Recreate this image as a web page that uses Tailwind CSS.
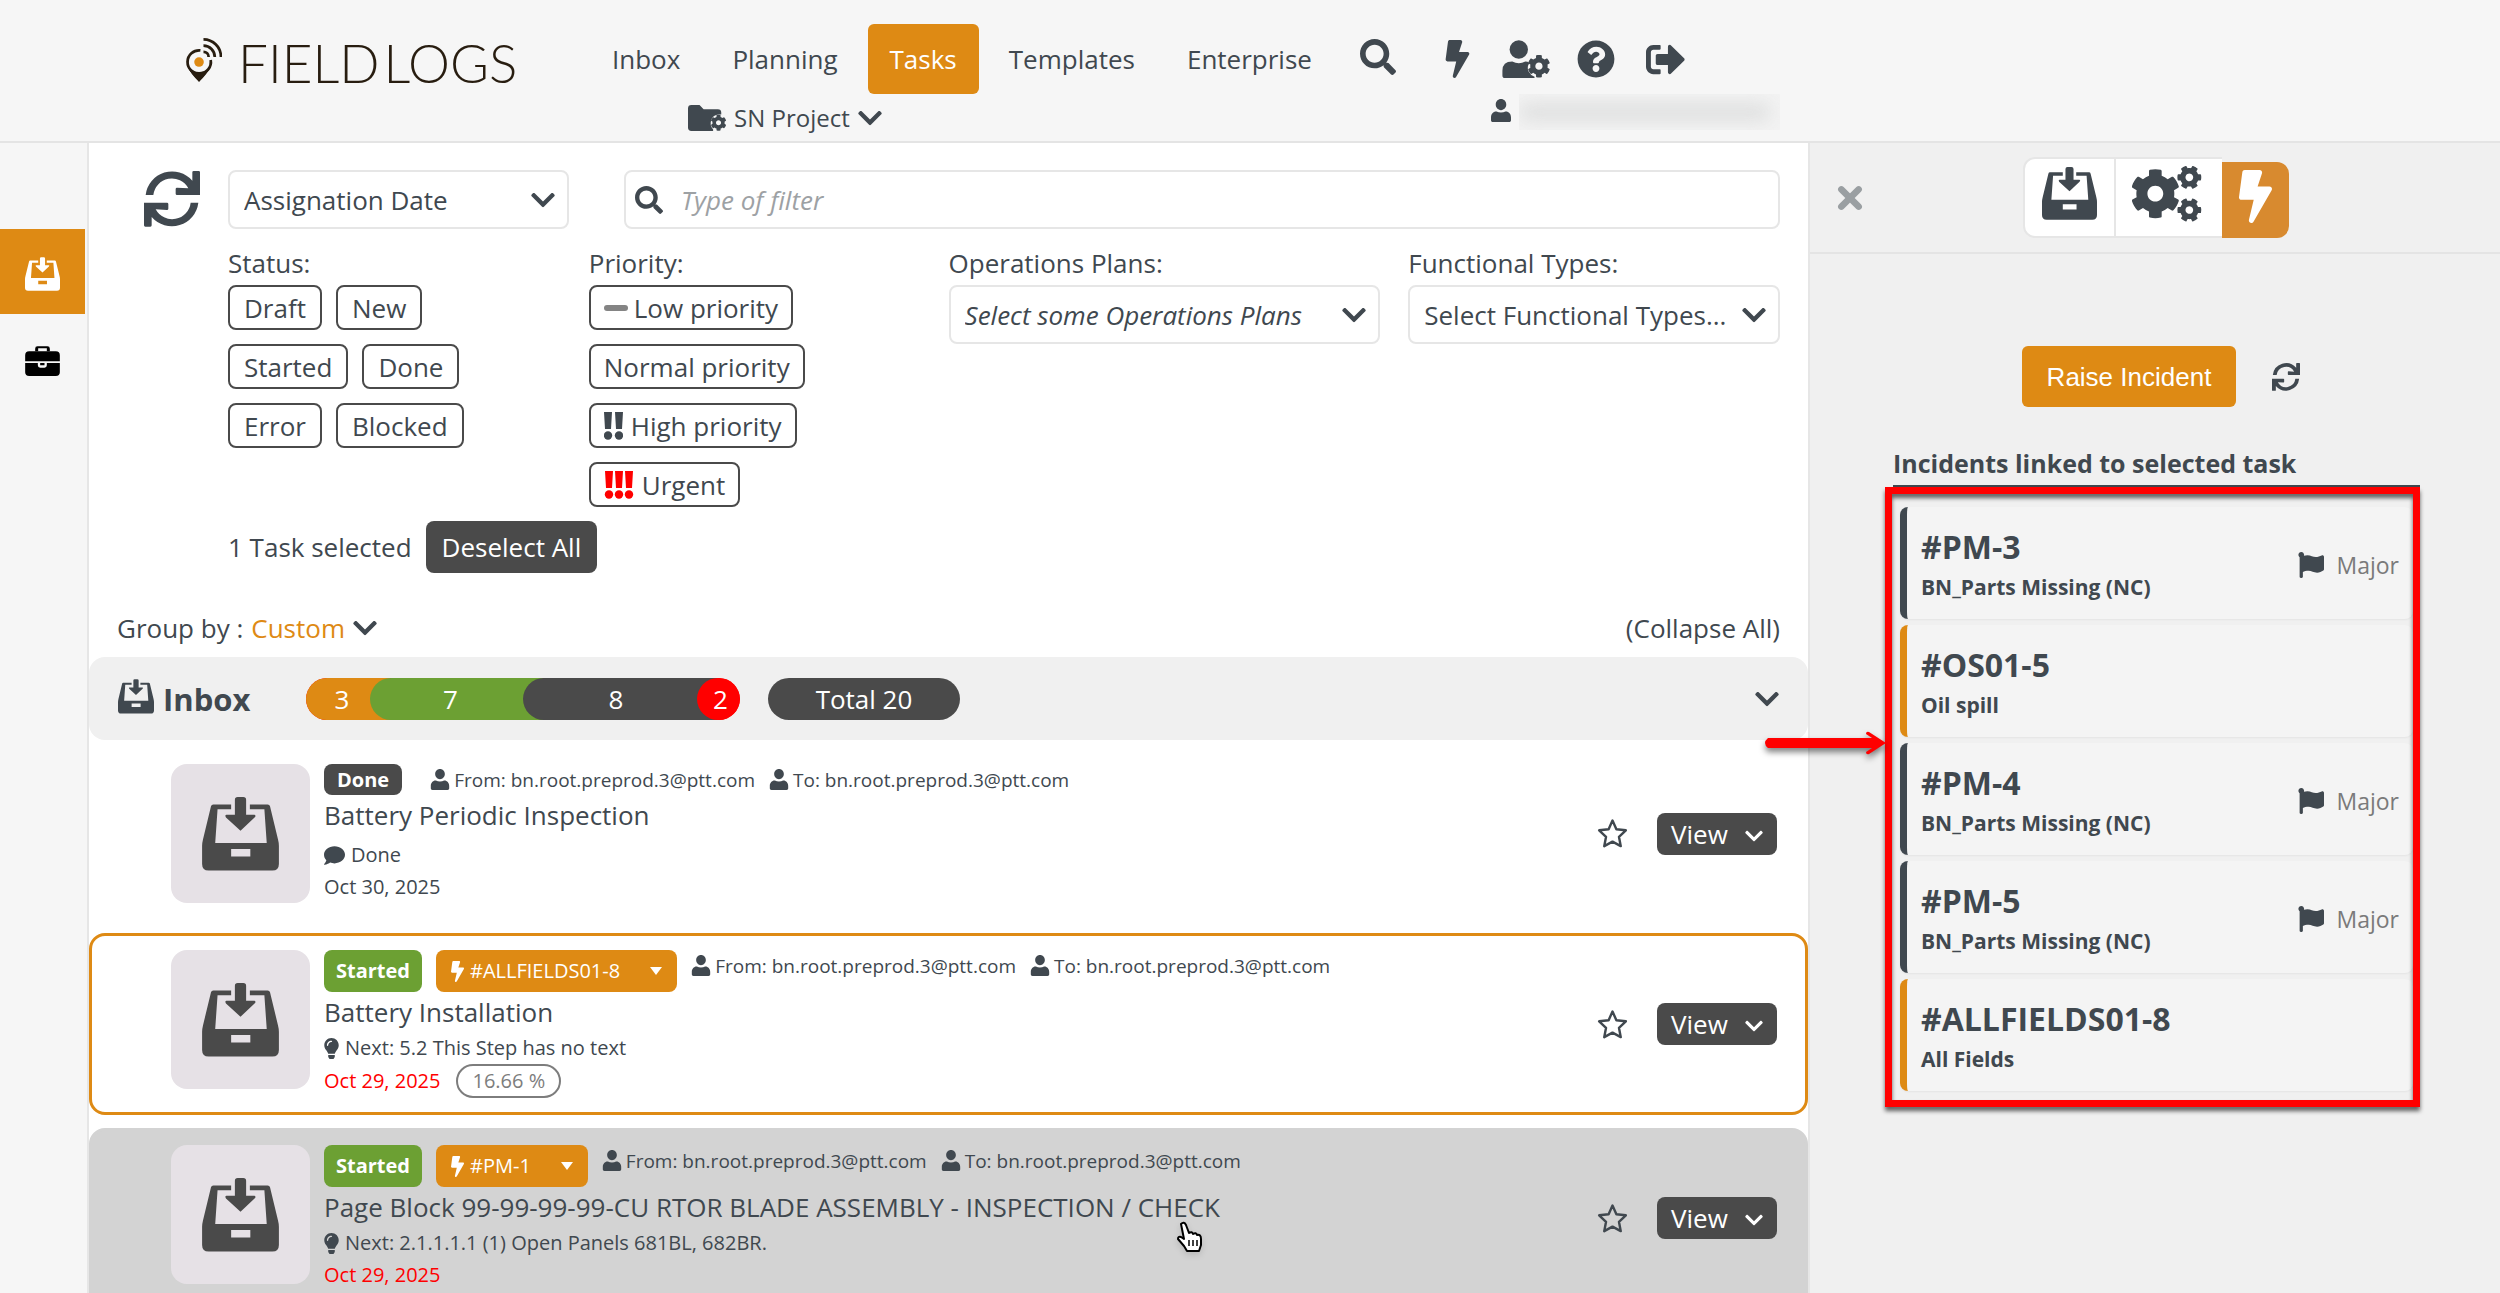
<!DOCTYPE html>
<html lang="en">
<head>
<meta charset="utf-8">
<title>Field Logs - Tasks</title>
<script src="https://cdn.jsdelivr.net/npm/@tailwindcss/browser@4"></script>
</head>
<body class="h-screen overflow-hidden flex flex-col bg-[#f6f6f6] text-[#40484f] font-['Open_Sans',sans-serif] text-[26px] leading-8">

<!-- Icon sprite -->
<svg class="hidden" aria-hidden="true">
  <symbol id="i-search" viewBox="0 0 512 512"><path d="M505 442.7L405.3 343c-4.5-4.5-10.6-7-17-7H372c27.6-35.3 44-79.7 44-128C416 93.1 322.9 0 208 0S0 93.1 0 208s93.1 208 208 208c48.3 0 92.7-16.4 128-44v16.3c0 6.4 2.5 12.5 7 17l99.7 99.7c9.4 9.4 24.6 9.4 33.9 0l28.3-28.3c9.4-9.4 9.4-24.6.1-34zM208 336c-70.7 0-128-57.2-128-128 0-70.7 57.2-128 128-128 70.7 0 128 57.2 128 128 0 70.7-57.2 128-128 128z"/></symbol>
  <symbol id="i-bolt" viewBox="0 0 320 512"><path d="M296 160H180.600l42.600-129.800C227.200 15 215.700 0 200 0H56C44 0 33.800 8.900 32.200 20.800l-32 240C-1.700 275.200 9.500 288 24 288h118.700L96.600 482.500c-3.600 15.200 8 29.500 23.300 29.500 8.400 0 16.400-4.400 20.800-12l176-304c9.300-15.900-2.200-36-20.700-36z"/></symbol>
  <symbol id="i-user" viewBox="0 0 448 512"><path d="M224 248c68 0 118-54 118-124S292 0 224 0 106 54 106 124s50 124 118 124zm110 32h-10c-30 14-62 22-100 22s-70-8-100-22h-10C50 280 0 340 0 412v60c0 24 16 40 40 40h368c24 0 40-16 40-40v-60c0-72-50-132-114-132z"/></symbol>
  <symbol id="i-cog" viewBox="0 0 512 512"><path d="M487.400 315.700l-42.600-24.600c4.300-23.200 4.300-47 0-70.200l42.600-24.600c4.900-2.800 7.100-8.600 5.500-14-11.100-35.600-30-67.800-54.700-94.600-3.800-4.100-10-5.100-14.800-2.300L380.800 110c-17.900-15.400-38.500-27.300-60.800-35.100V25.800c0-5.600-3.900-10.500-9.400-11.700-36.700-8.200-74.300-7.800-109.200 0-5.500 1.200-9.400 6.100-9.400 11.700V75c-22.200 7.900-42.800 19.800-60.800 35.100L88.700 85.500c-4.900-2.800-11-1.900-14.800 2.300-24.700 26.700-43.600 58.900-54.700 94.600-1.700 5.400.6 11.200 5.500 14L67.300 221c-4.300 23.200-4.300 47 0 70.200l-42.600 24.600c-4.900 2.800-7.100 8.600-5.500 14 11.100 35.600 30 67.800 54.700 94.600 3.800 4.100 10 5.100 14.800 2.300l42.600-24.600c17.900 15.400 38.500 27.300 60.800 35.100v49.200c0 5.600 3.900 10.500 9.400 11.700 36.700 8.200 74.300 7.800 109.200 0 5.500-1.200 9.400-6.100 9.400-11.700v-49.200c22.200-7.900 42.800-19.800 60.800-35.100l42.600 24.600c4.900 2.800 11 1.900 14.800-2.300 24.700-26.700 43.600-58.900 54.700-94.600 1.500-5.500-.7-11.300-5.600-14.100zM256 336c-44.100 0-80-35.900-80-80s35.900-80 80-80 80 35.900 80 80-35.900 80-80 80z"/></symbol>
  <symbol id="i-question" viewBox="0 0 512 512"><path d="M504 256c0 136.997-111.043 248-248 248S8 392.997 8 256C8 119.083 119.043 8 256 8s248 111.083 248 248zM262.655 90c-54.497 0-89.255 22.957-116.549 63.758-3.536 5.286-2.353 12.415 2.715 16.258l34.699 26.310c5.205 3.947 12.621 3.008 16.665-2.122 17.864-22.658 30.113-35.797 57.303-35.797 20.429 0 45.698 13.148 45.698 32.958 0 14.976-12.363 22.667-32.534 33.976C247.128 238.528 216 254.941 216 296v4c0 6.627 5.373 12 12 12h56c6.627 0 12-5.373 12-12v-1.333c0-28.462 83.186-29.647 83.186-106.667 0-58.002-60.165-102-116.531-102zM256 338c-25.365 0-46 20.635-46 46 0 25.364 20.635 46 46 46s46-20.636 46-46c0-25.365-20.635-46-46-46z"/></symbol>
  <symbol id="i-exit" viewBox="0 0 512 512"><path d="M500 273L329 441c-15 15-41 4.500-41-17v-96H152c-13.300 0-24-10.700-24-24v-96c0-13.300 10.700-24 24-24h136V88c0-21.400 25.900-32 41-17l171 168c9.300 9.400 9.300 24.600 0 34zM192 436v-40c0-6.600-5.400-12-12-12H96c-17.700 0-32-14.300-32-32V160c0-17.700 14.300-32 32-32h84c6.600 0 12-5.400 12-12V76c0-6.600-5.400-12-12-12H96c-53 0-96 43-96 96v192c0 53 43 96 96 96h84c6.600 0 12-5.400 12-12z"/></symbol>
  <symbol id="i-chevron" viewBox="0 120 448 270"><path d="M207.029 381.476L12.686 187.132c-9.373-9.373-9.373-24.569 0-33.941l22.667-22.667c9.357-9.357 24.522-9.375 33.901-.04L224 284.505l154.745-154.021c9.379-9.335 24.544-9.317 33.901.04l22.667 22.667c9.373 9.373 9.373 24.569 0 33.941L240.971 381.476c-9.373 9.372-24.569 9.372-33.942 0z"/></symbol>
  <symbol id="i-comment" viewBox="0 0 512 512"><path d="M256 32C114.600 32 0 125.100 0 240c0 49.600 21.400 95 57 130.700C44.500 421.100 2.700 466 2.200 466.500c-2.200 2.300-2.800 5.700-1.500 8.700S4.800 480 8 480c66.300 0 116-31.800 140.600-51.400 32.700 12.300 69 19.400 107.400 19.400 141.400 0 256-93.100 256-208S397.400 32 256 32z"/></symbol>
  <symbol id="i-flag" viewBox="0 0 512 512"><path d="M349.565 98.783C295.978 98.783 251.721 64 184.348 64c-24.955 0-47.309 4.384-68.045 12.013a55.947 55.947 0 0 0 3.586-23.562C118.117 24.015 94.806 1.206 66.338.048 34.345-1.254 8 24.296 8 56c0 19.026 9.497 35.825 24 45.945V488c0 13.255 10.745 24 24 24h16c13.255 0 24-10.745 24-24v-94.400c28.311-12.064 63.582-22.122 114.435-22.122 53.588 0 97.844 34.783 165.217 34.783 48.169 0 86.667-16.294 122.505-40.858C506.840 359.452 512 349.571 512 339.045v-243.100c0-23.393-24.269-38.870-45.485-29.016-34.338 15.948-76.454 31.854-116.950 31.854z"/></symbol>
  <symbol id="i-bulb" viewBox="0 0 352 512"><path d="M96.060 454.350c.01 6.290 1.870 12.450 5.360 17.690l17.090 25.690a31.990 31.990 0 0 0 26.640 14.280h61.710a31.990 31.990 0 0 0 26.640-14.280l17.090-25.690a31.989 31.989 0 0 0 5.360-17.690l.04-38.350H96.010l.05 38.350zM0 176c0 44.370 16.450 84.850 43.560 115.780 16.520 18.850 42.360 58.230 52.210 91.450.04.26.07.52.11.78h160.240c.04-.26.07-.51.11-.78 9.850-33.220 35.690-72.600 52.210-91.450C335.550 260.850 352 220.370 352 176 352 78.610 272.910-.3 175.450 0 73.440.31 0 82.970 0 176zm176-80c-44.110 0-80 35.890-80 80 0 8.840-7.160 16-16 16s-16-7.160-16-16c0-61.760 50.240-112 112-112 8.840 0 16 7.160 16 16s-7.160 16-16 16z"/></symbol>
  <symbol id="i-star" viewBox="0 0 36 36"><path d="M18 3l4.500 10 11 1.300-8 7.500 2.100 10.900-9.600-5.300-9.600 5.300 2.100-10.900-8-7.500 11-1.300z" fill="none" stroke="currentColor" stroke-width="2.800" stroke-linejoin="round"/></symbol>
  <symbol id="i-refresh" viewBox="0 0 168 168"><g id="half"><path d="M5 72A80 80 0 0 1 145 29V4q0-4 4-4h15q4 0 4 4v68h-69q-4 0-4-4V54q0-4 4-4l34 2A56 56 0 0 0 28 72z"/></g><use href="#half" transform="rotate(180 84 83.500)"/></symbol>
  <symbol id="i-inbox" viewBox="0 0 164 158"><path fill-rule="evenodd" d="M62 16H24q-4 0-5 4L2 90Q0 98 0 104V143Q0 157 14 157H150Q164 157 164 143V104Q164 98 162 90L145 20q-1-4-5-4H102V26H133L138 98H28L33 26H62ZM62 111H103V127H62Z"/><path d="M70 6Q70 0 76 0H88Q94 0 94 6V38H112Q116 40 112 44L82 72L51 44Q48 38 52 38H70Z"/></symbol>
  <symbol id="i-gears" viewBox="0 0 210 166"><use href="#i-cog" x="-6" y="6" width="152" height="152"/><g transform="rotate(30 172 33)"><use href="#i-cog" x="135" y="-4" width="74" height="74"/></g><g transform="rotate(30 172 131)"><use href="#i-cog" x="135" y="94" width="74" height="74"/></g></symbol>
  <symbol id="i-briefcase" viewBox="0 0 104 90"><path d="M30 16V8q0-7 7-7H67q7 0 7 7V16H65V7H39V16Z"/><path d="M12 16H92Q104 16 104 28V46H0V28Q0 16 12 16ZM0 51H38V58q0 7 7 7H58q7 0 7-7V51H104V79Q104 90 92 90H12Q0 90 0 79ZM45 51H58V58H45Z"/></symbol>
  <symbol id="i-usercog" viewBox="0 0 144 116"><circle cx="50" cy="29" r="28"/><path d="M0 108V94Q0 66 30 66Q50 76 70 66Q78 66 82 70Q74 84 80 96Q86 108 98 112V116H8Q0 116 0 108Z"/><use href="#i-cog" x="76" y="44" width="71" height="72"/></symbol>
  <symbol id="i-foldercog" viewBox="0 0 112 76"><path d="M0 10Q0 0 10 0H34L46 12H88Q98 12 98 22V28Q78 26 70 40Q62 58 74 72V76H10Q0 76 0 66Z"/><use href="#i-cog" x="66" y="28" width="48" height="48"/></symbol>
  <symbol id="i-close" viewBox="0 0 24 24"><path d="M4 4L20 20M20 4L4 20" fill="none" stroke="currentColor" stroke-width="6" stroke-linecap="round"/></symbol>
</svg>

<header class="flex shrink-0 h-[143px] border-b-2 border-[#e4e4e4] pl-[186px] pt-6">
  <a href="#" aria-label="Field Logs" class="flex items-center gap-4 w-[404px] h-[76px] shrink-0 text-[#281d10]">
    <svg class="w-[36px] h-[44px] mb-1" viewBox="0 0 105 128" fill="none">
      <path d="M38 128L10 94Q38 104 66 94Z" fill="currentColor"/>
      <path d="M42 36A34 34 0 1 0 72 64" stroke="currentColor" stroke-width="8"/>
      <path d="M4 80Q12 104 38 127Q64 104 72 80Q56 104 38 104Q20 104 4 80Z" fill="currentColor"/>
      <circle cx="38" cy="70" r="14" fill="#de8a14"/>
      <path d="M51 40A15 15 0 0 1 66 55M51 22A33 33 0 0 1 84 55M51 4A51 51 0 0 1 102 55" stroke="currentColor" stroke-width="8"/>
    </svg>
    <span class="flex gap-1 font-['Lato',sans-serif] font-light text-[53px] leading-none"><span>FIELD</span><span>LOGS</span></span>
  </a>
  <div class="flex flex-col">
    <nav class="flex gap-2 h-[70px]">
      <a href="#" class="flex items-center px-[22px] rounded-md">Inbox</a>
      <a href="#" class="flex items-center px-[22px] rounded-md">Planning</a>
      <a href="#" class="flex items-center px-[22px] rounded-md bg-[#de8a14] text-white">Tasks</a>
      <a href="#" class="flex items-center px-[22px] rounded-md">Templates</a>
      <a href="#" class="flex items-center px-[22px] rounded-md">Enterprise</a>
    </nav>
    <button class="flex items-center gap-2 pt-2 pl-[98px]">
      <svg class="w-[38px] h-[26px] fill-current"><use href="#i-foldercog"/></svg>
      <span class="text-[24px]">SN Project</span>
      <svg class="w-6 h-4 fill-current"><use href="#i-chevron"/></svg>
    </button>
  </div>
  <div class="flex flex-col pl-[26px]">
    <div class="flex items-center h-[70px]">
      <button aria-label="Search" class="mr-[49px] pb-1"><svg class="size-9 fill-current"><use href="#i-search"/></svg></button>
      <button aria-label="Incidents" class="mr-8"><svg class="w-[25px] h-[38px] fill-current"><use href="#i-bolt"/></svg></button>
      <button aria-label="User settings" class="mr-[27px]"><svg class="w-[48px] h-[38px] fill-current"><use href="#i-usercog"/></svg></button>
      <button aria-label="Help" class="mr-[31px]"><svg class="size-[38px] fill-current"><use href="#i-question"/></svg></button>
      <button aria-label="Log out"><svg class="size-[39px] fill-current"><use href="#i-exit"/></svg></button>
    </div>
    <div class="flex gap-2 pl-[131px]">
      <svg class="w-5 h-[23px] mt-[5px] fill-current"><use href="#i-user"/></svg>
      <span class="w-[261px] h-9 overflow-hidden bg-[#f3f3f3] flex items-center"><span class="w-[252px] h-4 rounded-full bg-[#dcdddd] blur-[9px]"></span></span>
    </div>
  </div>
</header>

<div class="flex flex-1 min-h-0">
  <aside class="w-[89px] shrink-0 border-r-2 border-[#e6e6e6] pt-[86px]">
    <a href="#" aria-label="Inbox" class="flex items-center justify-center w-[85px] h-[85px] bg-[#de8a14] text-white"><svg class="w-[35px] h-[34px] mt-1 fill-current"><use href="#i-inbox"/></svg></a>
    <a href="#" aria-label="Jobs" class="flex items-center justify-center w-[85px] h-[93px] text-black"><svg class="w-[35px] h-[30px] fill-current"><use href="#i-briefcase"/></svg></a>
  </aside>

  <main class="flex-1 min-w-0 bg-white pt-[27px]">
    <div class="flex pl-[55px] pr-7">
      <button aria-label="Refresh" class="self-start mr-[28px] mt-px"><svg class="size-14 fill-current"><use href="#i-refresh"/></svg></button>
      <div class="flex-1">
        <div class="flex">
          <div class="relative w-[341px] mr-[55px]">
            <select aria-label="Sort by" class="appearance-none w-full h-[59px] px-[14px] border-2 border-[#e6e6e6] rounded-lg"><option>Assignation Date</option></select>
            <svg class="absolute right-[14px] top-[22px] w-6 h-4 fill-current pointer-events-none"><use href="#i-chevron"/></svg>
          </div>
          <label class="flex flex-1 items-center gap-[18px] h-[59px] px-[9px] border-2 border-[#e6e6e6] rounded-lg">
            <svg class="size-7 fill-current"><use href="#i-search"/></svg>
            <input type="text" aria-label="Filter" placeholder="Type of filter" class="flex-1 italic outline-none placeholder:text-[#9da1a4]">
          </label>
        </div>
        <div class="grid grid-cols-[361fr_360fr_460fr_372fr] pt-[18px]">
          <section>
            <h2>Status:</h2>
            <div class="flex flex-wrap gap-[14px] pt-[6px] max-w-[300px]">
              <button class="h-[45px] px-[14px] border-2 border-[#4a4a4a] rounded-lg">Draft</button>
              <button class="h-[45px] px-[14px] border-2 border-[#4a4a4a] rounded-lg">New</button>
              <button class="h-[45px] px-[14px] border-2 border-[#4a4a4a] rounded-lg">Started</button>
              <button class="h-[45px] px-[14px] border-2 border-[#4a4a4a] rounded-lg">Done</button>
              <button class="h-[45px] px-[14px] border-2 border-[#4a4a4a] rounded-lg">Error</button>
              <button class="h-[45px] px-[14px] border-2 border-[#4a4a4a] rounded-lg">Blocked</button>
            </div>
          </section>
          <section>
            <h2>Priority:</h2>
            <div class="flex flex-col items-start gap-[14px] pt-[6px]">
              <button class="flex items-center gap-[6px] h-[45px] px-[13px] border-2 border-[#4a4a4a] rounded-lg"><span class="w-6 h-[6px] rounded-sm bg-[#848484]"></span>Low priority</button>
              <button class="flex items-center h-[45px] px-[13px] border-2 border-[#4a4a4a] rounded-lg">Normal priority</button>
              <button class="flex items-center gap-2 h-[45px] px-[13px] border-2 border-[#4a4a4a] rounded-lg">
                <svg class="w-[19px] h-7 fill-current" viewBox="0 0 19 28"><path d="M0 0h8l-1 17H1zM11 0h8l-1 17h-6z"/><circle cx="4" cy="23.500" r="4.200"/><circle cx="15" cy="23.500" r="4.200"/></svg>High priority</button>
              <button class="flex items-center gap-2 h-[45px] px-[13px] border-2 border-[#4a4a4a] rounded-lg">
                <svg class="w-[30px] h-7 fill-[#ff0000]" viewBox="0 0 30 28"><path d="M1 0h8l-1 17H2zM11 0h8l-1 17h-6zM21 0h8l-1 17h-6z"/><circle cx="5" cy="23.500" r="4.200"/><circle cx="15" cy="23.500" r="4.200"/><circle cx="25" cy="23.500" r="4.200"/></svg>Urgent</button>
            </div>
          </section>
          <section class="pr-7">
            <label for="plans" class="block">Operations Plans:</label>
            <div class="relative pt-[6px]">
              <select id="plans" class="appearance-none w-full h-[59px] px-[14px] border-2 border-[#e6e6e6] rounded-lg italic"><option>Select some Operations Plans</option></select>
              <svg class="absolute right-[14px] top-[28px] w-6 h-4 fill-current pointer-events-none"><use href="#i-chevron"/></svg>
            </div>
          </section>
          <section>
            <label for="types" class="block">Functional Types:</label>
            <div class="relative pt-[6px]">
              <select id="types" class="appearance-none w-full h-[59px] px-[14px] border-2 border-[#e6e6e6] rounded-lg"><option>Select Functional Types...</option></select>
              <svg class="absolute right-[14px] top-[28px] w-6 h-4 fill-current pointer-events-none"><use href="#i-chevron"/></svg>
            </div>
          </section>
        </div>
        <div class="flex items-center gap-[14px] pt-[14px]">
          <span>1 Task selected</span>
          <button class="h-[52px] px-4 rounded-lg bg-[#4a4a4a] text-white">Deselect All</button>
        </div>
      </div>
    </div>

    <div class="flex items-center justify-between h-[84px] pl-7 pr-7">
      <div class="flex items-center gap-2 pt-[26px]">
        <span>Group by :</span>
        <button class="flex items-center gap-2 text-[#de8a14]">Custom <svg class="w-6 h-4 fill-[#40484f]"><use href="#i-chevron"/></svg></button>
      </div>
      <button class="pt-[26px]">(Collapse All)</button>
    </div>

    <div class="flex items-center h-[83px] px-[29px] rounded-2xl bg-[#f0f0f0]">
      <svg class="w-9 h-[35px] mb-1 fill-current"><use href="#i-inbox"/></svg>
      <h2 class="w-[152px] pl-[9px] text-[31px] font-bold">Inbox</h2>
      <div class="flex h-[42px] rounded-full bg-[#ff0000] text-white overflow-hidden">
        <span class="flex items-center justify-center w-[84px] pr-3 bg-[#de8a14]">3</span>
        <span class="flex items-center justify-center w-[173px] -ml-5 pr-3 rounded-l-full bg-[#6ca033]">7</span>
        <span class="flex items-center justify-center w-[194px] -ml-5 pr-2 rounded-l-full bg-[#4a4a4a]">8</span>
        <span class="flex items-center justify-center w-[43px] -ml-5 pl-1 rounded-full bg-[#ff0000]">2</span>
      </div>
      <span class="flex items-center justify-center w-[192px] h-[42px] ml-7 rounded-full bg-[#4a4a4a] text-white">Total 20</span>
      <button aria-label="Collapse group" class="ml-auto"><svg class="w-6 h-4 fill-current"><use href="#i-chevron"/></svg></button>
    </div>

    <div class="flex flex-col gap-[13px] pt-[7px] text-[20px]">
      <article class="flex items-start p-[14px] pl-[79px] pr-[28px] border-3 border-transparent rounded-2xl">
        <div class="flex items-center justify-center size-[139px] mr-[14px] shrink-0 rounded-2xl bg-[#e6e1e6] text-[#4a4a4a]"><svg class="w-[77px] h-[74px] fill-current"><use href="#i-inbox"/></svg></div>
        <div class="flex-1">
          <div class="flex items-start gap-[14px] text-[19px]">
            <span class="flex items-center h-[31px] px-[13px] rounded-lg bg-[#4a4a4a] text-white text-[20px] font-bold">Done</span>
            <span class="flex items-center gap-1 h-[31px] pl-[14px]"><svg class="w-5 h-[21px] fill-current"><use href="#i-user"/></svg>From: bn.root.preprod.3@ptt.com</span>
            <span class="flex items-center gap-1 h-[31px]"><svg class="w-5 h-[21px] fill-current"><use href="#i-user"/></svg>To: bn.root.preprod.3@ptt.com</span>
          </div>
          <h3 class="text-[26px] leading-10">Battery Periodic Inspection</h3>
          <p class="flex items-center gap-[6px] h-8 mt-1"><svg class="size-[21px] fill-current"><use href="#i-comment"/></svg>Done</p>
          <p class="flex items-center h-8">Oct 30, 2025</p>
        </div>
        <div class="flex items-center gap-[29px] self-center">
          <button aria-label="Favourite"><svg class="size-[31px]"><use href="#i-star"/></svg></button>
          <button class="flex items-center justify-between w-[120px] h-[42px] px-[14px] rounded-lg bg-[#4a4a4a] text-white text-[26px]">View <svg class="w-[18px] h-3 mt-1 fill-current"><use href="#i-chevron"/></svg></button>
        </div>
      </article>

      <article class="flex items-start p-[14px] pl-[79px] pr-[28px] border-3 border-[#de8a14] rounded-2xl">
        <div class="flex items-center justify-center size-[139px] mr-[14px] shrink-0 rounded-2xl bg-[#e6e1e6] text-[#4a4a4a]"><svg class="w-[77px] h-[74px] fill-current"><use href="#i-inbox"/></svg></div>
        <div class="flex-1">
          <div class="flex items-start gap-[14px] text-[19px]">
            <span class="flex items-center h-[42px] px-3 rounded-lg bg-[#6ca033] text-white text-[20px] font-bold">Started</span>
            <button class="flex items-center gap-[6px] h-[42px] px-[15px] rounded-lg bg-[#de8a14] text-white text-[20px]"><svg class="w-[13px] h-[21px] fill-current"><use href="#i-bolt"/></svg>#ALLFIELDS01-8 <svg class="w-3 h-2 ml-6 fill-current" viewBox="0 0 12 8"><path d="M0 0h12L6 8z"/></svg></button>
            <span class="flex items-center gap-1 h-[31px]"><svg class="w-5 h-[21px] fill-current"><use href="#i-user"/></svg>From: bn.root.preprod.3@ptt.com</span>
            <span class="flex items-center gap-1 h-[31px]"><svg class="w-5 h-[21px] fill-current"><use href="#i-user"/></svg>To: bn.root.preprod.3@ptt.com</span>
          </div>
          <h3 class="text-[26px] leading-10">Battery Installation</h3>
          <p class="flex items-center gap-[6px] h-8"><svg class="w-[15px] h-[21px] fill-current"><use href="#i-bulb"/></svg>Next: 5.2 This Step has no text</p>
          <p class="flex items-center gap-4 text-[#ff0000]">Oct 29, 2025 <span class="flex items-center h-[34px] px-[14px] border-2 border-[#7d7d7d] rounded-full text-[#7d7d7d]">16.66 %</span></p>
        </div>
        <div class="flex items-center gap-[29px] self-center">
          <button aria-label="Favourite"><svg class="size-[31px]"><use href="#i-star"/></svg></button>
          <button class="flex items-center justify-between w-[120px] h-[42px] px-[14px] rounded-lg bg-[#4a4a4a] text-white text-[26px]">View <svg class="w-[18px] h-3 mt-1 fill-current"><use href="#i-chevron"/></svg></button>
        </div>
      </article>

      <article class="relative flex items-start p-[14px] pl-[79px] pr-[28px] border-3 border-[#d3d3d3] rounded-2xl bg-[#d3d3d3]">
        <div class="flex items-center justify-center size-[139px] mr-[14px] shrink-0 rounded-2xl bg-[#e6e1e6] text-[#4a4a4a]"><svg class="w-[77px] h-[74px] fill-current"><use href="#i-inbox"/></svg></div>
        <div class="flex-1">
          <div class="flex items-start gap-[14px] text-[19px]">
            <span class="flex items-center h-[42px] px-3 rounded-lg bg-[#6ca033] text-white text-[20px] font-bold">Started</span>
            <button class="flex items-center gap-[6px] h-[42px] px-[15px] rounded-lg bg-[#de8a14] text-white text-[20px]"><svg class="w-[13px] h-[21px] fill-current"><use href="#i-bolt"/></svg>#PM-1 <svg class="w-3 h-2 ml-6 fill-current" viewBox="0 0 12 8"><path d="M0 0h12L6 8z"/></svg></button>
            <span class="flex items-center gap-1 h-[31px]"><svg class="w-5 h-[21px] fill-current"><use href="#i-user"/></svg>From: bn.root.preprod.3@ptt.com</span>
            <span class="flex items-center gap-1 h-[31px]"><svg class="w-5 h-[21px] fill-current"><use href="#i-user"/></svg>To: bn.root.preprod.3@ptt.com</span>
          </div>
          <h3 class="text-[26px] leading-10">Page Block 99-99-99-99-CU RTOR BLADE ASSEMBLY - INSPECTION / CHECK</h3>
          <p class="flex items-center gap-[6px] h-8"><svg class="w-[15px] h-[21px] fill-current"><use href="#i-bulb"/></svg>Next: 2.1.1.1.1 (1) Open Panels 681BL, 682BR.</p>
          <p class="flex items-center h-8 text-[#ff0000]">Oct 29, 2025</p>
        </div>
        <div class="flex items-center gap-[29px] self-center">
          <button aria-label="Favourite"><svg class="size-[31px]"><use href="#i-star"/></svg></button>
          <button class="flex items-center justify-between w-[120px] h-[42px] px-[14px] rounded-lg bg-[#4a4a4a] text-white text-[26px]">View <svg class="w-[18px] h-3 mt-1 fill-current"><use href="#i-chevron"/></svg></button>
        </div>
        <!-- Mouse pointer -->
        <svg class="absolute left-[1083px] top-[90px] w-7 h-8 drop-shadow-md" viewBox="0 0 28 32" fill="#fff" stroke="#000" stroke-width="2" stroke-linejoin="round"><path d="M6 3q3-3 5 1l3 8q3-2 4 1 3-2 4 1 4-1 4 4v6l-2 6H12l-3-5-6-7q0-3 3-2l3 2z"/><path d="M14 19v6M18 19v6M22 19v6" stroke-width="1.500"/></svg>
      </article>
    </div>
  </main>

  <aside class="w-[692px] shrink-0 border-l-2 border-[#e6e6e6] bg-[#f0f0f0]">
    <div class="flex items-center h-[111px] pl-[27px] border-b-2 border-[#e4e4e4]">
      <button aria-label="Close" class="text-[#9a9fa2]"><svg class="size-[26px]"><use href="#i-close"/></svg></button>
      <div class="flex items-end ml-[160px]">
        <button aria-label="Tasks" class="flex items-center justify-center w-[93px] h-[81px] pb-2 border-2 border-[#e6e6e6] rounded-l-xl bg-white"><svg class="w-[55px] h-[53px] fill-current"><use href="#i-inbox"/></svg></button>
        <button aria-label="Configuration" class="flex items-center justify-center w-[106px] h-[81px] pb-2 pr-1 border-y-2 border-[#e6e6e6] bg-white"><svg class="w-[70px] h-[56px] fill-current"><use href="#i-gears"/></svg></button>
        <button aria-label="Incidents" class="flex items-center justify-center w-[67px] h-[76px] pb-2 rounded-r-xl bg-[#d88a2f] text-white"><svg class="w-[33px] h-[53px] fill-current"><use href="#i-bolt"/></svg></button>
      </div>
    </div>
    <div class="flex items-center gap-9 pl-[212px] pt-[92px]">
      <button class="h-[61px] w-[214px] rounded-md bg-[#de8a14] text-white font-['Liberation_Sans',sans-serif]">Raise Incident</button>
      <button aria-label="Refresh incidents"><svg class="size-7 fill-current"><use href="#i-refresh"/></svg></button>
    </div>
    <section class="pl-[83px] pr-20 pt-[38px]">
      <h2 class="h-[40px] text-[25px] leading-9 font-bold">Incidents linked to selected task</h2>
      <div class="relative flex flex-col gap-[6px] pt-5 pb-4 px-[7px] border-t-2 border-[#40484f]">
        <article class="flex items-center h-[112px] pl-[14px] pr-[14px] border-l-[7px] border-[#40484f] rounded-lg bg-[#f4f4f4] shadow-xs">
          <div class="flex-1 pt-1"><h3 class="text-[32px] leading-10 font-bold">#PM-3</h3><p class="pt-1 text-[21px] font-bold">BN_Parts Missing (NC)</p></div>
          <span class="flex items-center gap-3 pt-1 text-[23px] text-[#7a7a7a]"><svg class="size-[26px] fill-[#40484f]"><use href="#i-flag"/></svg>Major</span>
        </article>
        <article class="flex items-center h-[112px] pl-[14px] pr-[14px] border-l-[7px] border-[#de8a14] rounded-lg bg-[#f4f4f4] shadow-xs">
          <div class="flex-1 pt-1"><h3 class="text-[32px] leading-10 font-bold">#OS01-5</h3><p class="pt-1 text-[21px] font-bold">Oil spill</p></div>
        </article>
        <article class="flex items-center h-[112px] pl-[14px] pr-[14px] border-l-[7px] border-[#40484f] rounded-lg bg-[#f4f4f4] shadow-xs">
          <div class="flex-1 pt-1"><h3 class="text-[32px] leading-10 font-bold">#PM-4</h3><p class="pt-1 text-[21px] font-bold">BN_Parts Missing (NC)</p></div>
          <span class="flex items-center gap-3 pt-1 text-[23px] text-[#7a7a7a]"><svg class="size-[26px] fill-[#40484f]"><use href="#i-flag"/></svg>Major</span>
        </article>
        <article class="flex items-center h-[112px] pl-[14px] pr-[14px] border-l-[7px] border-[#40484f] rounded-lg bg-[#f4f4f4] shadow-xs">
          <div class="flex-1 pt-1"><h3 class="text-[32px] leading-10 font-bold">#PM-5</h3><p class="pt-1 text-[21px] font-bold">BN_Parts Missing (NC)</p></div>
          <span class="flex items-center gap-3 pt-1 text-[23px] text-[#7a7a7a]"><svg class="size-[26px] fill-[#40484f]"><use href="#i-flag"/></svg>Major</span>
        </article>
        <article class="flex items-center h-[112px] pl-[14px] pr-[14px] border-l-[7px] border-[#de8a14] rounded-lg bg-[#f4f4f4] shadow-xs">
          <div class="flex-1 pt-1"><h3 class="text-[32px] leading-10 font-bold">#ALLFIELDS01-8</h3><p class="pt-1 text-[21px] font-bold">All Fields</p></div>
        </article>
        <!-- Red call-out frame and arrow -->
        <div class="absolute -left-2 right-0 top-0 bottom-0 border-[7px] border-[#ff0000] drop-shadow-[0_4px_2px_rgba(0,0,0,0.6)]"></div>
        <svg class="absolute right-[534px] top-[245px] w-[122px] h-[22px] overflow-visible drop-shadow-[0_4px_3px_rgba(0,0,0,0.5)]" viewBox="0 0 122 22"><path d="M4 6h104l-6-4q0-3 3-2l17 11-17 11q-3 1-3-2l6-4H4q-6-5 0-10z" fill="#ff0000"/></svg>
      </div>
    </section>
  </aside>
</div>
</body>
</html>
